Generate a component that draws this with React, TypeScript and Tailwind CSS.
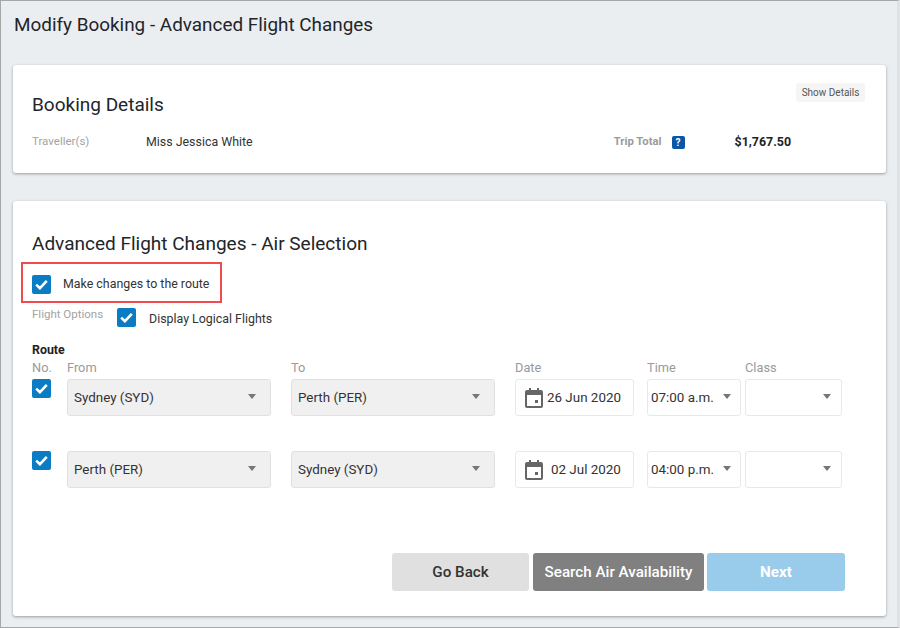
function Check({ className = '' }: { className?: string }) {
  return (
    <div className={`w-[19px] h-[19px] shrink-0 rounded-[2px] bg-[#0a7cc4] flex items-center justify-center ${className}`}>
      <svg width="13" height="11" viewBox="0 0 13 11" fill="none">
        <path d="M1.2 5.6 L4.9 9.2 L11.8 1.8" stroke="#fff" strokeWidth="2.6" />
      </svg>
    </div>
  );
}

function Caret({ className = '' }: { className?: string }) {
  return <div className={`w-0 h-0 border-x-[4.5px] border-x-transparent border-t-[5px] border-t-[#757575] ${className}`} />;
}

function GreySelect({ value, width }: { value: string; width: string }) {
  return (
    <div className={`${width} h-[37px] shrink-0 rounded-[3px] border border-[#e0e0e0] bg-[#f0f0f0] flex items-center justify-between pl-[6px] pr-[14px] text-[13.4px] text-[#333]`}>
      <span className="mt-[1px]">{value}</span>
      <Caret className="-mt-[3px]" />
    </div>
  );
}

function CalendarIcon() {
  return (
    <svg width="18" height="20" viewBox="0 0 18 20" className="shrink-0">
      <path d="M4 0h2v2h6V0h2v2h2a2 2 0 0 1 2 2v14a2 2 0 0 1-2 2H2a2 2 0 0 1-2-2V4a2 2 0 0 1 2-2h2V0zM2 7v11h14V7H2z" fill="#666" />
      <rect x="10" y="12" width="3" height="3" fill="#666" />
    </svg>
  );
}

function RouteRow({ from, to, date, time, dateGap }: { from: string; to: string; date: string; time: string; dateGap: string }) {
  return (
    <div className="flex items-start h-[37px]">
      <Check />
      <div className="ml-[16px] flex gap-[20px]">
        <GreySelect value={from} width="w-[204px]" />
        <GreySelect value={to} width="w-[204px]" />
      </div>
      <div className={`ml-[20px] w-[119px] h-[37px] rounded-[3px] border border-[#e8e8e8] flex items-center pl-[9px] text-[13.4px] text-[#333] ${dateGap}`}>
        <CalendarIcon />
        <span className="mt-[1px]">{date}</span>
      </div>
      <div className="ml-[13px] w-[94px] h-[37px] rounded-[3px] border border-[#e8e8e8] flex items-center justify-between pl-[3px] pr-[9px] text-[13.4px] text-[#333]">
        <span className="mt-[1px]">{time}</span>
        <Caret className="-mt-[2px]" />
      </div>
      <div className="ml-[4px] w-[97px] h-[37px] rounded-[3px] border border-[#e8e8e8] flex items-center justify-end pr-[10px]">
        <Caret className="-mt-[2px]" />
      </div>
    </div>
  );
}

export default function App() {
  return (
    <div className="w-[900px] h-[628px] overflow-hidden bg-[#ebeef1] border-t border-l border-r-[3px] border-b border-[#a6a6a6] border-r-[#dfe2e5] font-['Roboto',sans-serif] text-[#212529] pl-[12px] pr-[11px]">
      <h1 className="text-[18.9px] leading-[24px] mt-[12px] ml-[1px] font-normal">Modify Booking - Advanced Flight Changes</h1>

      {/* Booking details */}
      <section className="mt-[28px] h-[108px] bg-white rounded-[3px] shadow-[0_1px_3px_rgba(0,0,0,0.35)] pl-[19px] pr-[21px] pt-[19px]">
        <div className="flex justify-between items-start">
          <h2 className="text-[19px] leading-[24px] mt-[9px] font-normal">Booking Details</h2>
          <button className="-mt-[1px] w-[69px] h-[19px] rounded-[3px] bg-[#f5f5f5] text-[10px] leading-[19px] text-[#555]">Show Details</button>
        </div>
        <div className="mt-[15px] flex items-center h-[20px] text-[12.4px]">
          <span className="w-[114px] text-[11.5px] text-[#a3a3a3]">Traveller(s)</span>
          <span className="mt-[1px] text-[#333]">Miss Jessica White</span>
          <span className="ml-auto font-bold text-[11.3px] text-[#9b9b9b]">Trip Total</span>
          <span className="ml-[10px] w-[13px] h-[13px] rounded-[2px] bg-[#0a56a5] text-white text-[10px] leading-[13px] font-bold text-center">?</span>
          <span className="ml-[50px] mr-[74px] font-bold text-[12.4px] text-[#222]">$1,767.50</span>
        </div>
      </section>

      {/* Air selection */}
      <section className="mt-[28px] h-[415px] bg-white rounded-[3px] shadow-[0_1px_3px_rgba(0,0,0,0.35)] pl-[19px] pt-[31px]">
        <h2 className="text-[19px] leading-[24px] font-normal">Advanced Flight Changes - Air Selection</h2>

        <div className="mt-[6px] -ml-[11px] w-[201px] h-[41px] border-2 border-[#f04b4f] flex items-center pl-[9px] text-[12.4px] text-[#333]">
          <Check className="mt-[3px]" />
          <span className="ml-[12px] mt-[4px]">Make changes to the route</span>
        </div>

        <div className="mt-[5px] flex items-start h-[22px] text-[12.4px]">
          <span className="text-[11.5px] -mt-[2px] text-[#a3a3a3] w-[85px]">Flight Options</span>
          <Check />
          <span className="ml-[13px] mt-[2px] text-[#333]">Display Logical Flights</span>
        </div>

        <div className="mt-[12px] text-[12.4px] leading-[16px] font-bold text-[#222]">Route</div>

        <div className="flex text-[12.8px] leading-[16px] text-[#9a9a9a] mb-[3px] mt-[2px]">
          <span className="w-[35px]">No.</span>
          <span className="w-[224px]">From</span>
          <span className="w-[224px]">To</span>
          <span className="w-[132px]">Date</span>
          <span className="w-[98px]">Time</span>
          <span>Class</span>
        </div>

        <div className="flex flex-col gap-[35px]">
          <RouteRow from="Sydney (SYD)" to="Perth (PER)" date="26 Jun 2020" time="07:00 a.m." dateGap="gap-[4px]" />
          <RouteRow from="Perth (PER)" to="Sydney (SYD)" date="02 Jul 2020" time="04:00 p.m." dateGap="gap-[8px]" />
        </div>

        <div className="mt-[65px] ml-[360px] flex text-[15.2px] font-medium">
          <button className="w-[137px] h-[38px] rounded-[3px] bg-[#e0e0e0] text-[#333]">Go Back</button>
          <button className="ml-[4px] w-[171px] h-[38px] rounded-[3px] bg-[#808080] text-white">Search Air Availability</button>
          <button className="ml-[3px] w-[138px] h-[38px] rounded-[3px] bg-[#99cbea] text-white font-bold">Next</button>
        </div>
      </section>
    </div>
  );
}
